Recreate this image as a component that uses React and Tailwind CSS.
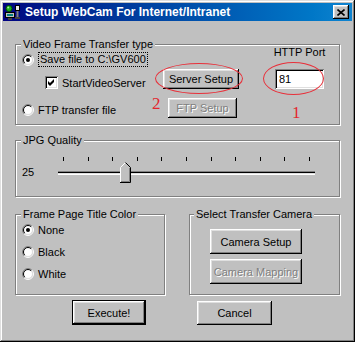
const raised = 'shadow-[inset_-1px_-1px_0_#000,inset_1px_1px_0_#fff,inset_-2px_-2px_0_#808080,inset_2px_2px_0_#dfdfdf]'
const sunken = 'shadow-[inset_1px_1px_0_#808080,inset_-1px_-1px_0_#fff,inset_2px_2px_0_#000,inset_-2px_-2px_0_#dfdfdf]'
const etched = 'border border-[#808080] shadow-[inset_1px_1px_0_#fff,1px_1px_0_#fff]'

function Radio({ checked }) {
  return (
    <svg width="12" height="12" viewBox="0 0 12 12" className="shrink-0">
      <circle cx="6" cy="6" r="4.5" fill="#fff" />
      <path d="M2.111 9.889 A5.5 5.5 0 0 1 9.889 2.111" stroke="#808080" fill="none" />
      <path d="M9.889 2.111 A5.5 5.5 0 0 1 2.111 9.889" stroke="#fff" fill="none" />
      <path d="M2.818 9.182 A4.5 4.5 0 0 1 9.182 2.818" stroke="#000" fill="none" />
      <path d="M9.182 2.818 A4.5 4.5 0 0 1 2.818 9.182" stroke="#dfdfdf" fill="none" />
      {checked && <circle cx="6" cy="6" r="2" fill="#000" />}
    </svg>
  )
}

function Checkbox() {
  return (
    <div className={`h-[13px] w-[13px] shrink-0 bg-white ${sunken}`}>
      <svg width="13" height="13" viewBox="0 0 13 13">
        <path d="M3 5 L5 7 L9 3 L9 6 L5 10 L3 8 Z" fill="#000" />
      </svg>
    </div>
  )
}

function WinButton({ children, disabled, isDefault, className = '' }) {
  return (
    <div className={`bg-[#c0c0c0] ${isDefault ? 'border border-black' : ''} ${className}`}>
      <div className={`flex h-full w-full items-center justify-center pt-[1px] ${raised} ${disabled ? 'text-[#808080] [text-shadow:1px_1px_0_#fff]' : ''}`}>
        {children}
      </div>
    </div>
  )
}

function GroupTitle({ children, className = '' }) {
  return <div className={`-mt-[8px] w-fit bg-[#c0c0c0] px-[2px] leading-[14px] ${className}`}>{children}</div>
}

function AppIcon() {
  return (
    <svg width="16" height="16" viewBox="0 0 16 16" className="shrink-0">
      <rect x="1.5" y="8.5" width="9" height="5" fill="#c0c0c0" stroke="#000" />
      <rect x="3" y="10" width="6" height="2" fill="#008080" />
      <rect x="4" y="14" width="4" height="2" fill="#404040" />
      <circle cx="5" cy="4.5" r="3" fill="#20b020" stroke="#005000" />
      <circle cx="4.2" cy="3.6" r="1" fill="#a0f0a0" />
      <rect x="11.5" y="1.5" width="4" height="5" fill="#e8e8e8" stroke="#000" />
      <rect x="12.5" y="7" width="2" height="6" fill="#808080" />
      <rect x="11" y="13" width="5" height="2" fill="#404040" />
    </svg>
  )
}

export default function App() {
  const ticks = Array.from({ length: 11 })
  return (
    <div className="whitespace-nowrap font-['Liberation_Sans',Arial,sans-serif] text-[11px] text-black">
      <div className="flex h-[342px] w-[355px] flex-col bg-[#c0c0c0] p-[3px] shadow-[inset_-1px_-1px_0_#000,inset_1px_1px_0_#dfdfdf,inset_-2px_-2px_0_#808080,inset_2px_2px_0_#fff]">
        {/* title bar */}
        <div className="flex h-[18px] items-center bg-gradient-to-r from-[#000080] to-[#1084d0]">
          <div className="ml-[1px]">
            <AppIcon />
          </div>
          <div className="ml-[5px] text-[12px] font-bold leading-[18px] text-white">
            Setup WebCam For Internet/Intranet
          </div>
          <div className={`ml-auto mr-[3px] flex h-[14px] w-[16px] items-center justify-center bg-[#c0c0c0] ${raised}`}>
            <svg width="8" height="7" viewBox="0 0 8 7">
              <path d="M0.5 0.5 L7.5 6.5 M7.5 0.5 L0.5 6.5" stroke="#000" strokeWidth="1.6" />
            </svg>
          </div>
        </div>

        <div className="pl-[12px]">
          {/* Video Frame Transfer type */}
          <div className={`relative mt-[23px] h-[81px] w-[325px] ${etched}`}>
            <div className="flex">
              <div className="w-[134px]">
                <GroupTitle className="ml-[5px]">Video Frame Transfer type</GroupTitle>
                <div className="ml-[6px] mt-[1px] flex h-[15px] items-center gap-[4px]">
                  <Radio checked />
                  <span className="h-[15px] border border-dotted border-black px-[1px] leading-[13px]">Save file to C:\GV600</span>
                </div>
                <div className="ml-[29px] mt-[8px] flex h-[15px] items-center gap-[4px] leading-[14px]">
                  <Checkbox />
                  <span>StartVideoServer</span>
                </div>
                <div className="ml-[6px] mt-[12px] flex h-[15px] items-center gap-[4px] leading-[14px]">
                  <Radio />
                  <span>FTP transfer file</span>
                </div>
              </div>

              <div className="w-[90px] pt-[24px]">
                <WinButton className="ml-[13px] h-[20px] w-[76px]">Server Setup</WinButton>
                <div className="mt-[9px] flex items-start">
                  <div className="-mt-[3px] w-[18px] pl-[2px] font-['Liberation_Serif','Times_New_Roman',serif] text-[17px] leading-[17px] text-[#e3262e]">2</div>
                  <WinButton disabled className="h-[20px] w-[69px]">FTP Setup</WinButton>
                </div>
              </div>

              <div className="ml-[35px] flex w-[49px] flex-col">
                <div className="self-center leading-[14px]">HTTP Port</div>
                <div className={`mt-[10px] flex h-[20px] items-center bg-white pl-[4px] leading-[14px] ${sunken}`}>81</div>
                <div className="mt-[15px] pl-[17px] font-['Liberation_Serif','Times_New_Roman',serif] text-[17px] leading-[17px] text-[#e3262e]">1</div>
              </div>
            </div>

            <div className="pointer-events-none absolute left-[139px] top-[18px] h-[31px] w-[88px] rounded-[50%] border border-[#e8303a]" />
            <div className="pointer-events-none absolute left-[247px] top-[17px] h-[33px] w-[61px] rounded-[50%] border border-[#e8303a]" />
          </div>

          {/* JPG Quality */}
          <div className={`mt-[15px] h-[57px] w-[325px] ${etched}`}>
            <GroupTitle className="ml-[5px]">JPG Quality</GroupTitle>
            <div className="flex">
              <div className="w-[42px] pl-[6px] pt-[18px] leading-[14px]">25</div>
              <div className="relative w-[257px] pt-[10px]">
                <div className="flex h-[4px] justify-between px-[5px]">
                  {ticks.map((_, i) => (
                    <span key={i} className="h-[4px] w-[1px] bg-black" />
                  ))}
                </div>
                <div className="mt-[10px] h-[4px] border-y border-t-[#808080] border-b-white bg-[#dfdfdf] shadow-[inset_0_1px_0_#000]" />
                <svg width="11" height="21" viewBox="0 0 11 21" className="absolute left-[62px] top-[15px]">
                  <polygon points="0.5,5.5 5.5,0.5 10.5,5.5 10.5,20.5 0.5,20.5" fill="#c0c0c0" />
                  <path d="M0.5 20 V5.5 L5.5 0.5" stroke="#fff" fill="none" />
                  <path d="M5.5 0.5 L10.5 5.5 V20.5 H0" stroke="#000" fill="none" />
                  <path d="M9.5 6 V19.5 H1" stroke="#808080" fill="none" />
                </svg>
              </div>
            </div>
          </div>

          {/* bottom groups */}
          <div className="mt-[17px] flex gap-[24px]">
            <div className={`h-[81px] w-[150px] ${etched}`}>
              <GroupTitle className="ml-[5px]">Frame Page Title Color</GroupTitle>
              <div className="ml-[6px] mt-[1px] flex h-[15px] items-center gap-[4px] leading-[14px]">
                <Radio checked />
                <span>None</span>
              </div>
              <div className="ml-[6px] mt-[7px] flex h-[15px] items-center gap-[4px] leading-[14px]">
                <Radio />
                <span>Black</span>
              </div>
              <div className="ml-[6px] mt-[7px] flex h-[15px] items-center gap-[4px] leading-[14px]">
                <Radio />
                <span>White</span>
              </div>
            </div>

            <div className={`h-[81px] w-[151px] ${etched}`}>
              <GroupTitle className="ml-[4px]">Select Transfer Camera</GroupTitle>
              <WinButton className="ml-[20px] mt-[8px] h-[25px] w-[92px]">Camera Setup</WinButton>
              <WinButton disabled className="ml-[20px] mt-[5px] h-[25px] w-[92px]">Camera Mapping</WinButton>
            </div>
          </div>

          {/* action buttons */}
          <div className="mt-[5px] flex items-start">
            <WinButton isDefault className="ml-[57px] h-[25px] w-[74px]">Execute!</WinButton>
            <WinButton className="ml-[51px] mt-[1px] h-[24px] w-[75px]">Cancel</WinButton>
          </div>
        </div>
      </div>
    </div>
  )
}
